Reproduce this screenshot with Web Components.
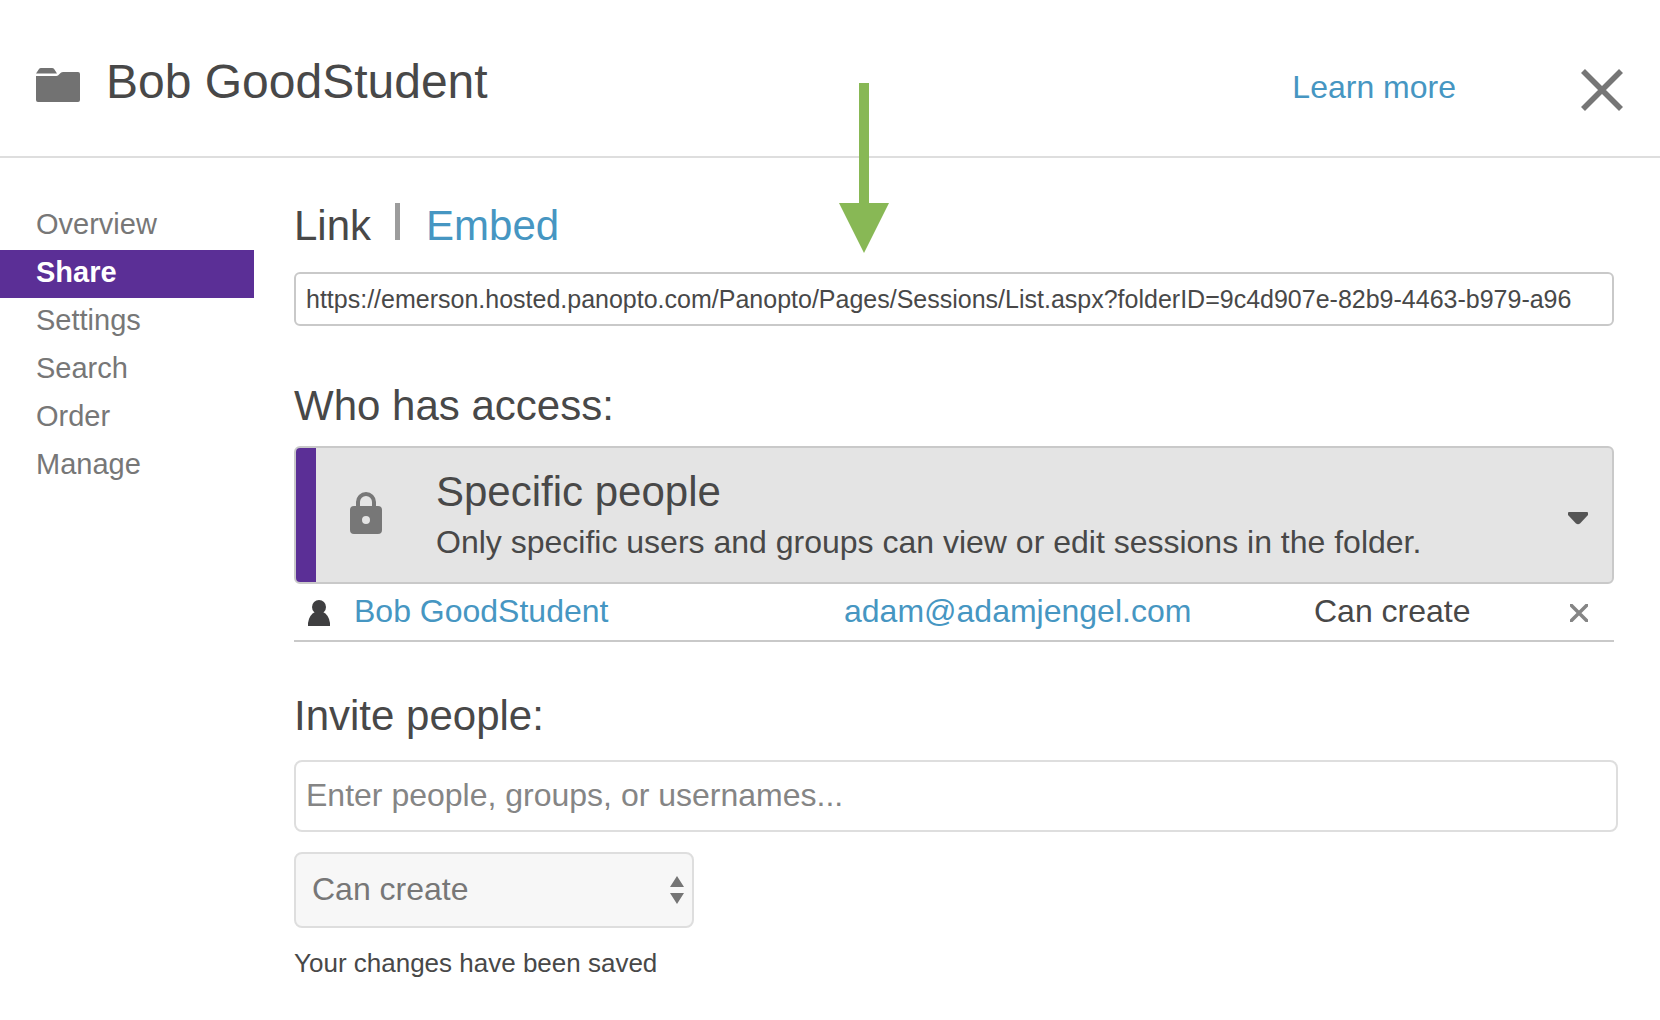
<!DOCTYPE html>
<html lang="en">
<head>
<meta charset="utf-8">
<title>Bob GoodStudent - Share</title>
<style>
  body {
    margin: 0;
    background: #fff;
    color: #484848;
    font-family: "Liberation Sans", Arial, sans-serif;
    --accent: #5b2f96;
    --link: #4696c2;
    --muted: #777;
    --text-url: 25px;
    --text-sm: 26px;
    --text-nav: 29px;
    --text-md: 32px;
    --text-lg: 42px;
    --text-xl: 48px;
  }
</style>
</head>
<body>
<folder-dialog>
  <dialog-header slot="header" href="#learn">Bob GoodStudent</dialog-header>
  <side-nav slot="nav" items="Overview,Share,Settings,Search,Order,Manage" active="Share"></side-nav>
  <share-link value="https://emerson.hosted.panopto.com/Panopto/Pages/Sessions/List.aspx?folderID=9c4d907e-82b9-4463-b979-a96"></share-link>
  <access-panel>
    <span slot="title">Specific people</span>
    <span slot="detail">Only specific users and groups can view or edit sessions in the folder.</span>
  </access-panel>
  <invite-form>Your changes have been saved</invite-form>
  <callout-arrow slot="overlay"></callout-arrow>
</folder-dialog>

<script>
  const define = (name, html, setup) => {
    const template = document.createElement("template");
    template.innerHTML = `<style>
      * { box-sizing: border-box; }
      :host { display: block; }
      a { color: var(--link); text-decoration: none; }
      h1, h2, p { margin: 0; font-weight: 400; }
      h2 { font-size: var(--text-lg); line-height: 48px; }
      button { border: 0; padding: 0; background: none; color: inherit; font: inherit; cursor: pointer; }
      svg { display: block; }
    </style>` + html;
    customElements.define(name, class extends HTMLElement {
      constructor() {
        super();
        this.attachShadow({ mode: "open" }).append(template.content.cloneNode(true));
      }
      connectedCallback() {
        if (setup) setup(this, this.shadowRoot);
      }
    });
  };

  define("folder-dialog", `
    <style>
      :host { position: relative; }
      .body { display: flex; }
      main { flex: 1; min-width: 0; padding: 44px 46px 40px 40px; }
    </style>
    <slot name="header"></slot>
    <div class="body">
      <slot name="nav"></slot>
      <main><slot></slot></main>
    </div>
    <slot name="overlay"></slot>`);

  define("dialog-header", `
    <style>
      header { display: flex; align-items: center; height: 158px; padding: 14px 37px 0 36px; border-bottom: 2px solid #dedede; }
      h1 { flex: 1; padding: 0 0 6px 26px; font-size: var(--text-xl); line-height: 56px; }
      a { margin-right: 125px; padding-top: 4px; font-size: var(--text-md); line-height: 36px; }
      button { padding-top: 10px; }
    </style>
    <header>
      <svg width="44" height="34" viewBox="0 0 44 34" fill="#727272" aria-hidden="true">
        <path d="M0 5.5 3 1Q3.600 0 5 0H16Q17.500 0 18.300 1.200L21 5.500Z"/>
        <path d="M0 8H20.500Q22 8 23.500 6 25 4 27 4H42Q44 4 44 6V32Q44 34 42 34H2Q0 34 0 32Z"/>
      </svg>
      <h1><slot></slot></h1>
      <a>Learn more</a>
      <button type="button" aria-label="Close">
        <svg width="42" height="42" viewBox="0 0 42 42" stroke="#767676" stroke-width="5.600"><path d="M2 2 40 40M40 2 2 40"/></svg>
      </button>
    </header>`,
    (host, root) => { root.querySelector("a").href = host.getAttribute("href"); });

  define("side-nav", `
    <style>
      :host { flex: 0 0 254px; padding-top: 44px; }
      nav { display: flex; flex-direction: column; }
      a { padding: 0 0 4px 36px; color: var(--muted); font-size: var(--text-nav); line-height: 44px; }
      a[aria-current] { background: var(--accent); color: #fff; font-weight: 700; }
    </style>
    <nav></nav>`,
    (host, root) => {
      root.querySelector("nav").replaceChildren(...host.getAttribute("items").split(",").map((label) => {
        const link = document.createElement("a");
        link.href = "#" + label.toLowerCase();
        link.textContent = label;
        if (label === host.getAttribute("active")) link.setAttribute("aria-current", "page");
        return link;
      }));
    });

  define("share-link", `
    <style>
      .tabs { display: flex; }
      .bar { width: 5px; height: 37px; margin: 1px 26px 0 24px; background: #9c9c9c; }
      input { display: block; width: 100%; height: 54px; margin-top: 22px; padding: 0 10px; border: 2px solid #c9c9c9; border-radius: 6px; background: #fff; color: inherit; font: var(--text-url) "Liberation Sans", Arial, sans-serif; outline: 0; }
    </style>
    <div class="tabs">
      <h2>Link</h2><span class="bar"></span><h2><a href="#embed">Embed</a></h2>
    </div>
    <input type="text" aria-label="Link" readonly>`,
    (host, root) => { root.querySelector("input").value = host.getAttribute("value"); });

  define("access-panel", `
    <style>
      :host { padding-top: 56px; }
      .choice { display: flex; align-items: center; width: 100%; min-height: 138px; margin-top: 16px; padding-right: 24px; border: 2px solid #c9c9c9; border-radius: 6px; background: #e4e4e4; text-align: left; overflow: hidden; }
      .strip { align-self: stretch; width: 20px; background: var(--accent); }
      .lock { margin: 0 54px 4px 34px; }
      .text { flex: 1; display: flex; flex-direction: column; gap: 8px; padding-bottom: 2px; }
      .title { font-size: var(--text-lg); line-height: 48px; }
      .detail { font-size: var(--text-md); line-height: 36px; }
      .caret { margin-top: 6px; }
      table { width: 100%; table-layout: fixed; border-collapse: collapse; border-bottom: 2px solid #c9c9c9; font-size: var(--text-md); line-height: 36px; }
      td { height: 57px; padding: 0 0 2px; vertical-align: middle; }
      .icon { width: 60px; padding-left: 14px; }
      .mail { width: 470px; }
      .role { width: 256px; }
      .remove { width: 44px; }
      .icon svg, .remove svg { margin-top: 4px; }
    </style>
    <h2>Who has access:</h2>
    <button class="choice" type="button" aria-haspopup="listbox">
      <span class="strip"></span>
      <svg class="lock" width="32" height="42" viewBox="0 0 32 42" aria-hidden="true">
        <path d="M8 16V10a8 8 0 0 1 16 0v6" fill="none" stroke="#777" stroke-width="4"/>
        <path fill="#777" fill-rule="evenodd" d="M4 14H28Q32 14 32 18V38Q32 42 28 42H4Q0 42 0 38V18Q0 14 4 14ZM16 24a4 4 0 1 0 0 8 4 4 0 1 0 0-8Z"/>
      </svg>
      <span class="text">
        <span class="title"><slot name="title"></slot></span>
        <span class="detail"><slot name="detail"></slot></span>
      </span>
      <svg class="caret" width="20" height="13" viewBox="0 0 20 13" fill="#555" aria-hidden="true"><path d="M1 0H19Q20 0 20 1V3L12 11.500Q10 13 8 11.500L0 3V1Q0 0 1 0Z"/></svg>
    </button>
    <table aria-label="People with access">
      <tr>
        <td class="icon"><svg width="22" height="26" viewBox="0 0 22 26" fill="#3f3f41" aria-hidden="true"><circle cx="11" cy="7" r="7"/><path d="M0 26V23Q1 15 7 12H15Q21 15 22 23V26Z"/></svg></td>
        <td><a href="#user">Bob GoodStudent</a></td>
        <td class="mail"><a href="mailto:adam@adamjengel.com">adam@adamjengel.com</a></td>
        <td class="role">Can create</td>
        <td class="remove"><button type="button" aria-label="Remove Bob GoodStudent"><svg width="18" height="18" viewBox="0 0 18 18" stroke="#858585" stroke-width="3.500"><path d="M0 0 18 18M18 0 0 18"/></svg></button></td>
      </tr>
    </table>`);

  define("invite-form", `
    <style>
      :host { padding-top: 50px; }
      input, select { display: block; border: 2px solid #dedede; border-radius: 8px; font: var(--text-md) "Liberation Sans", Arial, sans-serif; outline: 0; }
      .people { margin: 20px -4px 20px 0; }
      input { width: 100%; height: 72px; padding: 0 10px 2px; background: #fff; color: inherit; }
      input::placeholder { color: #858585; opacity: 1; }
      .level { display: grid; width: 400px; align-items: center; }
      .level > * { grid-area: 1 / 1; }
      select { width: 100%; height: 76px; padding: 0 40px 2px 16px; appearance: none; background: #f7f7f7; color: var(--muted); }
      .level svg { justify-self: end; margin-right: 10px; pointer-events: none; z-index: 1; }
      p { margin-top: 20px; font-size: var(--text-sm); line-height: 30px; }
    </style>
    <h2><label for="people">Invite people:</label></h2>
    <div class="people"><input id="people" type="text" placeholder="Enter people, groups, or usernames..."></div>
    <div class="level">
      <select aria-label="Permission"><option>Can create</option></select>
      <svg width="14" height="28" viewBox="0 0 14 28" fill="#757575" aria-hidden="true"><path d="M7 0 14 11H0ZM0 17H14L7 28Z"/></svg>
    </div>
    <p role="status"><slot></slot></p>`);

  define("callout-arrow", `
    <style>
      :host { position: absolute; top: 83px; left: 52%; margin-left: -24px; pointer-events: none; }
    </style>
    <svg width="50" height="170" viewBox="0 0 50 170" fill="#88b855" aria-hidden="true"><path d="M20 0H30V120H50L25 170 0 120H20Z"/></svg>`);
</script>
</body>
</html>
